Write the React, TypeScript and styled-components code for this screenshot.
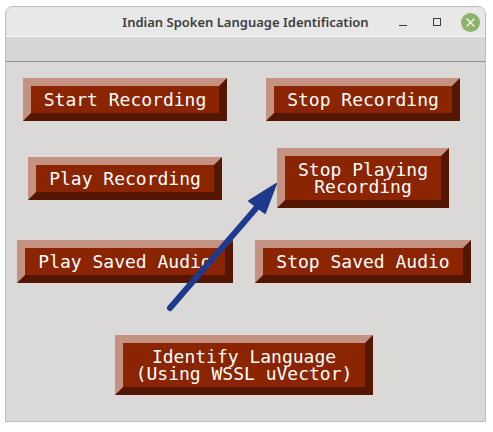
import React from "react";
import styled, { createGlobalStyle } from "styled-components";

const Global = createGlobalStyle`
  html, body { margin: 0; padding: 0; background: #ffffff; }
  * { box-sizing: border-box; }
`;

const Frame = styled.div`
  margin: 6px 0 0 5px;
  width: 481px;
  height: 416px;
  border: 1px solid #bcbcbc;
  border-radius: 8px 8px 0 0;
  overflow: hidden;
  display: flex;
  flex-direction: column;
  background: #dad9d8;
`;

const TitleBar = styled.div`
  position: relative;
  height: 30px;
  flex: none;
  background: #e8e8e8;
  border-bottom: 1px solid #fafafa;
  display: flex;
  align-items: center;
  justify-content: center;
`;

const Title = styled.span`
  font-family: "Noto Sans", "Open Sans", sans-serif;
  font-weight: 600;
  font-size: 13px;
  color: #3d3d3d;
  margin-top: 1px;
`;

const Controls = styled.div`
  position: absolute;
  right: 5px;
  top: 5px;
  display: flex;
  align-items: center;
  gap: 14px;
`;

const CtlButton = styled.div`
  width: 20px;
  height: 20px;
  display: flex;
  align-items: center;
  justify-content: center;
`;

const CloseCircle = styled.div`
  width: 19px;
  height: 19px;
  border-radius: 50%;
  background: #8cb26c;
  display: flex;
  align-items: center;
  justify-content: center;
`;

const MenuBar = styled.div`
  height: 25px;
  flex: none;
  background: #d6d6d6;
  border-bottom: 1px solid #8c8c8c;
`;

const Body = styled.div`
  position: relative;
  flex: 1;
  display: grid;
  grid-template-columns: 238px 238px;
  grid-template-rows: 74px 84px 83px auto;
  justify-items: center;
  align-items: center;
`;

const TkButton = styled.button<{ $span?: boolean; $top?: number }>`
  grid-column: ${(p) => (p.$span ? "1 / span 2" : "auto")};
  align-self: ${(p) => (p.$top !== undefined ? "start" : "center")};
  margin-top: ${(p) => (p.$top !== undefined ? `${p.$top}px` : "0")};
  border-width: 8px;
  border-style: solid;
  border-color: #c59281 #541600 #541600 #c59281;
  background: #8b2400;
  color: #ffffff;
  font-family: "DejaVu Sans Mono", "Liberation Mono", monospace;
  font-size: 18px;
  line-height: 17px;
  padding: 5px 13px;
  white-space: pre;
  text-align: center;
  cursor: pointer;
`;

const Arrow = styled.svg`
  position: absolute;
  left: 0;
  top: 0;
  width: 479px;
  height: 359px;
  pointer-events: none;
`;

export default function App() {
  return (
    <>
      <Global />
      <Frame>
        <TitleBar>
          <Title>Indian Spoken Language Identification</Title>
          <Controls>
            <CtlButton>
              <svg width="10" height="10" viewBox="0 0 10 10">
                <line x1="1" y1="8.5" x2="9" y2="8.5" stroke="#3d3d3d" strokeWidth="1" />
              </svg>
            </CtlButton>
            <CtlButton>
              <svg width="10" height="10" viewBox="0 0 10 10">
                <rect x="1.5" y="1.5" width="7" height="7" fill="none" stroke="#3d3d3d" strokeWidth="1" />
              </svg>
            </CtlButton>
            <CloseCircle>
              <svg width="9" height="9" viewBox="0 0 9 9">
                <path d="M1 1 L8 8 M8 1 L1 8" stroke="#ffffff" strokeWidth="1.3" strokeLinecap="round" />
              </svg>
            </CloseCircle>
          </Controls>
        </TitleBar>
        <MenuBar />
        <Body>
          <TkButton>Start Recording</TkButton>
          <TkButton>Stop Recording</TkButton>
          <TkButton>Play Recording</TkButton>
          <TkButton>{"Stop Playing\nRecording"}</TkButton>
          <TkButton>Play Saved Audio</TkButton>
          <TkButton>Stop Saved Audio</TkButton>
          <TkButton $span $top={32}>{"Identify Language\n(Using WSSL uVector)"}</TkButton>
          <Arrow viewBox="0 0 479 359">
            <line x1="164" y1="246" x2="252" y2="144" stroke="#1d3a8c" strokeWidth="6" strokeLinecap="round" />
            <polygon points="270,122 243,139 259,151" fill="#1d3a8c" stroke="#1d3a8c" strokeWidth="2" strokeLinejoin="round" />
          </Arrow>
        </Body>
      </Frame>
    </>
  );
}
